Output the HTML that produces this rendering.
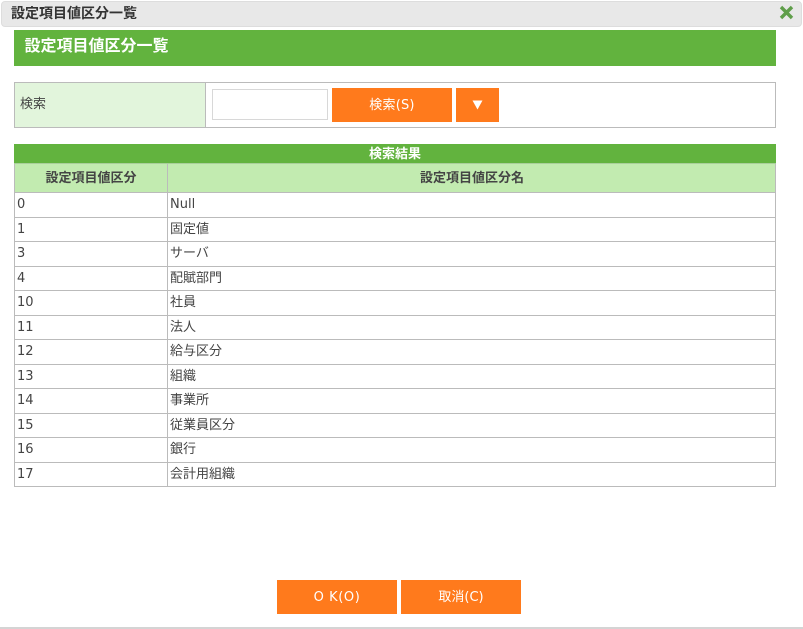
<!DOCTYPE html>
<html lang="ja"><head><meta charset="utf-8"><title>設定項目値区分一覧</title>
<style>
html,body{margin:0;padding:0;width:803px;height:629px;overflow:hidden;background:#fff}
body{font-family:"DejaVu Sans","Noto Sans CJK JP",sans-serif;font-size:13px;color:#333;position:relative}
div{position:absolute;box-sizing:border-box;white-space:nowrap}
.btn{background:#ff7a1c;color:#fff;text-align:center;font-size:13px;line-height:36px;height:34px}
.line{left:14px;width:762px;height:1px;background:#bbb}
.c1,.c2{height:20px;line-height:20px;font-size:13px;color:#444}
.c1{left:17px}.c2{left:170px}
</style></head><body>
<div style="left:1px;top:1px;width:801px;height:26px;background:#e8e8e8;border:1px solid #ddd;border-radius:4px"></div>
<div style="left:11px;top:4px;line-height:20px;font-size:14px;font-weight:bold;color:#333">設定項目値区分一覧</div>
<svg style="position:absolute;left:779px;top:5px" width="15" height="15" viewBox="0 0 15 15"><path d="M2 2L13 13M13 2L2 13" stroke="#5f9e4a" stroke-width="3.4" fill="none"/></svg>
<div style="left:14px;top:30px;width:762px;height:36px;background:#62b33e"></div>
<div style="left:25px;top:35px;line-height:22px;font-size:16px;font-weight:bold;color:#fff;margin-left:-.5px">設定項目値区分一覧</div>

<div style="left:14px;top:82px;width:762px;height:46px;border:1px solid #bbb"></div>
<div style="left:15px;top:83px;width:191px;height:44px;background:#e2f5dc;border-right:1px solid #bbb"></div>
<div style="left:20px;top:95px;line-height:20px;font-size:13px;color:#444">検索</div>
<div style="left:212px;top:89px;width:116px;height:31px;border:1px solid #d8d8d8;background:#fff"></div>
<div class="btn" style="left:332px;top:88px;width:120px;letter-spacing:.2px">検索(S)</div>
<div style="left:456px;top:88px;width:43px;height:34px;background:#ff7a1c"></div>
<svg style="position:absolute;left:472px;top:100px" width="11" height="10" viewBox="0 0 11 10"><path d="M0.5 0.5H10.5L5.5 9.5Z" fill="#fff"/></svg>

<div style="left:14px;top:144px;width:762px;height:19px;background:#62b33e;color:#fff;font-size:13px;font-weight:bold;text-align:center;line-height:21px">検索結果</div>
<div style="left:14px;top:163px;width:762px;height:30px;background:#c2ebb0;border-top:1px solid #a9cf9b"></div>
<div style="left:15px;top:165px;width:152px;height:28px;line-height:28px;text-align:center;font-size:13px;font-weight:bold;color:#444">設定項目値区分</div>
<div style="left:168px;top:165px;width:608px;height:28px;line-height:28px;text-align:center;font-size:13px;font-weight:bold;color:#444">設定項目値区分名</div>

<div style="left:14px;top:164px;width:1px;height:323px;background:#bbb"></div>
<div style="left:167px;top:164px;width:1px;height:323px;background:#bbb"></div>
<div style="left:775px;top:164px;width:1px;height:323px;background:#bbb"></div>
<div class="line" style="top:192px"></div>
<div class="line" style="top:217px"></div>
<div class="line" style="top:241px"></div>
<div class="line" style="top:266px"></div>
<div class="line" style="top:290px"></div>
<div class="line" style="top:315px"></div>
<div class="line" style="top:339px"></div>
<div class="line" style="top:364px"></div>
<div class="line" style="top:388px"></div>
<div class="line" style="top:413px"></div>
<div class="line" style="top:437px"></div>
<div class="line" style="top:462px"></div>
<div class="line" style="top:486px"></div>

<div class="c1" style="top:195px">0</div><div class="c2" style="top:195px">Null</div>
<div class="c1" style="top:220px">1</div><div class="c2" style="top:220px">固定値</div>
<div class="c1" style="top:244px">3</div><div class="c2" style="top:244px">サーバ</div>
<div class="c1" style="top:269px">4</div><div class="c2" style="top:269px">配賦部門</div>
<div class="c1" style="top:293px">10</div><div class="c2" style="top:293px">社員</div>
<div class="c1" style="top:318px">11</div><div class="c2" style="top:318px">法人</div>
<div class="c1" style="top:342px">12</div><div class="c2" style="top:342px">給与区分</div>
<div class="c1" style="top:367px">13</div><div class="c2" style="top:367px">組織</div>
<div class="c1" style="top:391px">14</div><div class="c2" style="top:391px">事業所</div>
<div class="c1" style="top:416px">15</div><div class="c2" style="top:416px">従業員区分</div>
<div class="c1" style="top:440px">16</div><div class="c2" style="top:440px">銀行</div>
<div class="c1" style="top:465px">17</div><div class="c2" style="top:465px">会計用組織</div>

<div class="btn" style="left:277px;top:580px;width:120px;letter-spacing:.6px">O K(O)</div>
<div class="btn" style="left:401px;top:580px;width:120px">取消(C)</div>
<div style="left:0;top:627px;width:803px;height:2px;background:#d4d4d4"></div>
</body></html>
